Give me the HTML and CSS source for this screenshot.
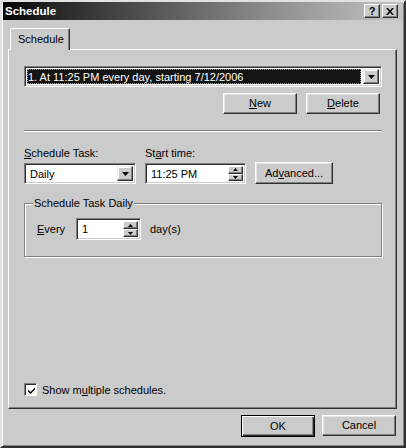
FILE: index.html
```html
<!DOCTYPE html>
<html>
<head>
<meta charset="utf-8">
<link rel="stylesheet" href="styles.css">
</head>
<body>
<div class="window">
  <div class="titlebar">
    <span class="title">Schedule</span>
    <div class="tbtns">
      <span class="tbtn q">?</span>
      <span class="tbtn"><svg width="8" height="7" viewBox="0 0 8 7"><path d="M0 0h2l2 2.5L6 0h2L5 3.5L8 7H6L4 4.5L2 7H0l3-3.5z" fill="#000"/></svg></span>
    </div>
  </div>
  <div class="client">
    <div class="tabs"><div class="tab">Schedule</div></div>
    <div class="panel">
      <div class="combo wide">
        <div class="combo-text"><span class="sel">1. At 11:25 PM every day, starting 7/12/2006</span></div>
        <div class="dd"><svg width="7" height="4" viewBox="0 0 7 4"><path d="M0 0h7L3.5 4z" fill="#000"/></svg></div>
      </div>
      <div class="btnrow">
        <button class="btn"><u>N</u>ew</button>
        <button class="btn"><u>D</u>elete</button>
      </div>
      <div class="sep"></div>
      <div class="fields">
        <div class="field">
          <div class="lbl"><u>S</u>chedule Task:</div>
          <div class="combo task">
            <div class="combo-text plain">Daily</div>
            <div class="dd"><svg width="7" height="4" viewBox="0 0 7 4"><path d="M0 0h7L3.5 4z" fill="#000"/></svg></div>
          </div>
        </div>
        <div class="field">
          <div class="lbl">St<u>a</u>rt time:</div>
          <div class="spin time">
            <div class="spin-text">11:25 PM</div>
            <div class="arrows">
              <div class="arr"><svg width="5" height="3" viewBox="0 0 5 3"><path d="M2.5 0L5 3H0z" fill="#000"/></svg></div>
              <div class="arr"><svg width="5" height="3" viewBox="0 0 5 3"><path d="M0 0h5L2.5 3z" fill="#000"/></svg></div>
            </div>
          </div>
        </div>
        <button class="btn adv">Ad<u>v</u>anced...</button>
      </div>
      <fieldset class="group">
        <legend>Schedule Task Daily</legend>
        <div class="every">
          <span class="every-lbl"><u>E</u>very</span>
          <div class="spin days">
            <div class="spin-text">1</div>
            <div class="arrows">
              <div class="arr"><svg width="5" height="3" viewBox="0 0 5 3"><path d="M2.5 0L5 3H0z" fill="#000"/></svg></div>
              <div class="arr"><svg width="5" height="3" viewBox="0 0 5 3"><path d="M0 0h5L2.5 3z" fill="#000"/></svg></div>
            </div>
          </div>
          <span class="unit">day(s)</span>
        </div>
      </fieldset>
      <div class="spacer"></div>
      <div class="check">
        <span class="box"><svg width="9" height="9" viewBox="0 0 9 9"><path d="M1 3.5l2.5 2.5L8 1.5v2L3.5 8 1 5.5z" fill="#000"/></svg></span>
        <span>Show m<u>u</u>ltiple schedules.</span>
      </div>
    </div>
    <div class="footer">
      <button class="btn default">OK</button>
      <button class="btn">Cancel</button>
    </div>
  </div>
</div>
</body>
</html>
```
FILE: styles.css
```css
* { box-sizing: border-box; }
html, body { margin: 0; padding: 0; background: #cbcbcb; }
body {
  font-family: "Liberation Sans", Arial, sans-serif;
  font-size: 11px;
  color: #000;
}
u { text-decoration: underline; text-underline-offset: 1px; }

.window {
  width: 406px;
  height: 448px;
  background: #cbcbcb;
  border: 2px solid;
  border-color: #e2e2e2 #303030 #303030 #e2e2e2;
  box-shadow: inset 1px 1px #fff, inset -1px -1px #808080;
  padding: 0 1px 1px 1px;
  display: flex;
  flex-direction: column;
}

.titlebar {
  height: 18px;
  background: linear-gradient(to right, #050505 0%, #2a2a2a 15%, #8a8a8a 65%, #c4c4c4 100%);
  display: flex;
  align-items: center;
  justify-content: space-between;
  padding: 0 5px 0 2px;
  flex: none;
}
.title {
  color: #fff;
  font-weight: bold;
  font-size: 11.5px;
}
.tbtns { display: flex; gap: 2px; }
.tbtn {
  width: 16px;
  height: 14px;
  background: #cbcbcb;
  border: 1px solid;
  border-color: #fff #303030 #303030 #fff;
  box-shadow: inset -1px -1px #808080;
  display: flex;
  align-items: center;
  justify-content: center;
  font-weight: bold;
  font-size: 11px;
  line-height: 1;
}

.client {
  flex: 1;
  display: flex;
  flex-direction: column;
  padding: 8px 6px 0 5px;
}

.tabs { display: flex; height: 21px; padding-left: 2px; position: relative; z-index: 1; }
.tab {
  width: 60px;
  height: 22px;
  background: #cbcbcb;
  border: 1px solid;
  border-bottom: none;
  border-color: #fff #303030 #cbcbcb #fff;
  box-shadow: inset -1px 0 #808080;
  border-radius: 2px 2px 0 0;
  padding: 4px 0 0 7px;
  line-height: 13px;
}

.panel {
  height: 360px;
  border: 1px solid;
  border-color: #fff #303030 #303030 #fff;
  box-shadow: inset -1px -1px #808080;
  padding: 16px 14px 12px 15px;
  display: flex;
  flex-direction: column;
}

.combo, .spin {
  background: #fff;
  border: 1px solid;
  border-color: #808080 #fff #fff #808080;
  box-shadow: inset 1px 1px #303030, inset -1px -1px #cbcbcb;
  display: flex;
  padding: 2px;
}
.combo.wide { height: 21px; }
.combo-text { flex: 1; display: flex; align-items: center; padding-right: 2px; }
.sel {
  flex: 1;
  align-self: stretch;
  background: #141414;
  color: #fff;
  padding: 0 0 0 1px;
  line-height: 17px;
  outline: 1px dotted #9a9a9a;
  outline-offset: -1px;
}
.combo-text.plain { padding-left: 3px; }
.dd {
  width: 16px;
  background: #cbcbcb;
  border: 1px solid;
  border-color: #e8e8e8 #303030 #303030 #e8e8e8;
  box-shadow: inset -1px -1px #808080, inset 1px 1px #fff;
  display: flex;
  align-items: center;
  justify-content: center;
}

.btn {
  font: inherit;
  color: #000;
  background: #cbcbcb;
  border: 1px solid;
  border-color: #fff #303030 #303030 #fff;
  box-shadow: inset -1px -1px #808080, inset 1px 1px #e6e6e6;
  width: 74px;
  height: 21px;
  padding: 0;
  text-align: center;
  line-height: 17px;
}
.btn.default {
  border: 1px solid #000;
  box-shadow: inset 1px 1px #fff, inset -1px -1px #303030, inset -2px -2px #808080;
  height: 22px;
}

.btnrow {
  display: flex;
  justify-content: flex-end;
  gap: 9px;
  margin-top: 6px;
  padding-right: 2px;
}

.sep {
  margin-top: 16px;
  height: 2px;
  border-top: 1px solid #808080;
  border-bottom: 1px solid #fff;
}

.fields {
  display: flex;
  align-items: flex-end;
  gap: 9px;
  margin-top: 14px;
}
.field { display: flex; flex-direction: column; gap: 3px; }
.lbl { line-height: 14px; }
.combo.task { width: 112px; height: 21px; }
.spin.time { width: 101px; height: 21px; }
.spin-text { flex: 1; padding-left: 3px; display: flex; align-items: center; }
.arrows { width: 15px; display: flex; flex-direction: column; }
.arr {
  flex: 1;
  background: #cbcbcb;
  border: 1px solid;
  border-color: #fff #303030 #303030 #fff;
  box-shadow: inset -1px -1px #808080;
  display: flex;
  align-items: center;
  justify-content: center;
}
.btn.adv { width: 78px; height: 22px; line-height: 18px; }

.group {
  margin: 13px 0 0 0;
  padding: 8px 12px 16px 12px;
  border: 1px solid #808080;
  box-shadow: inset 1px 1px #fff, 1px 1px #fff;
  min-width: 0;
}
.group legend {
  padding: 0 1px;
  margin-left: -4px;
  line-height: 13px;
  background: #cbcbcb;
  position: relative;
  z-index: 1;
}
.every { display: flex; align-items: center; }
.every-lbl { width: 39px; }
.spin.days { width: 65px; height: 22px; }
.unit { margin-left: 9px; }

.spacer { flex: 1; }

.check { display: flex; align-items: center; gap: 5px; height: 13px; }
.box {
  width: 13px;
  height: 13px;
  background: #fff;
  border: 1px solid;
  border-color: #808080 #fff #fff #808080;
  box-shadow: inset 1px 1px #303030;
  display: flex;
  align-items: center;
  justify-content: center;
  padding: 1px 0 0 1px;
}

.footer {
  display: flex;
  justify-content: flex-end;
  gap: 7px;
  margin-top: 6px;
  padding-right: 1px;
}
```
